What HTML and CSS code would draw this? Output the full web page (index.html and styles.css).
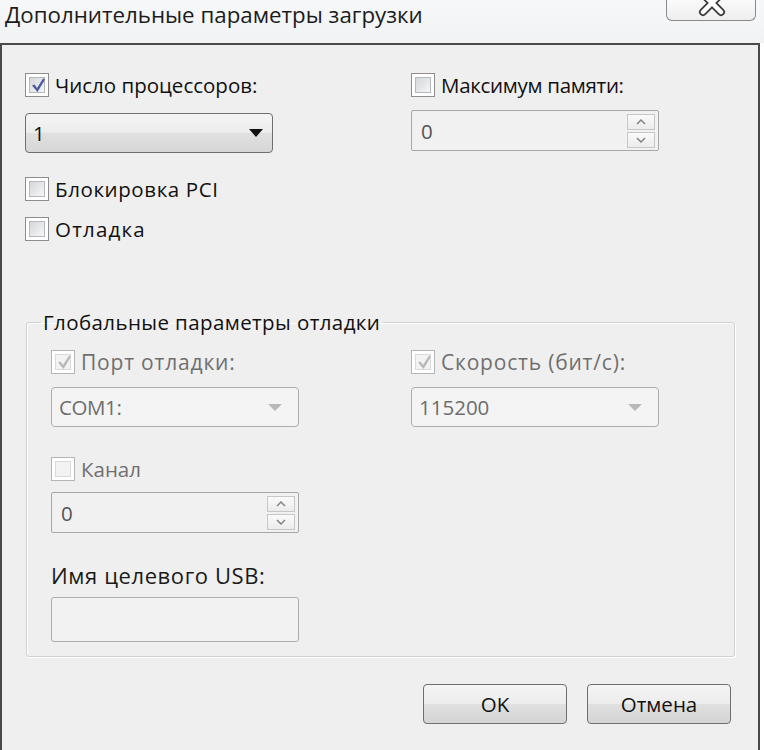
FILE: index.html
```html
<!DOCTYPE html>
<html lang="ru">
<head>
<meta charset="utf-8">
<title>Дополнительные параметры загрузки</title>
<link rel="stylesheet" href="styles.css">
</head>
<body>
<div class="titlebar">
  <div class="title">Дополнительные параметры загрузки</div>
  <div class="close">
    <svg width="34" height="20" viewBox="0 0 34 20">
      <path d="M8 -5 L26 13 M26 -5 L8 13" stroke="#3a3a3a" stroke-width="8" stroke-linecap="round" fill="none"/>
      <path d="M8 -5 L26 13 M26 -5 L8 13" stroke="#ffffff" stroke-width="4.5" stroke-linecap="round" fill="none"/>
    </svg>
  </div>
</div>
<div class="window">
  <div class="top">
    <div class="col col-left">
      <div class="check">
        <span class="box"><svg class="tick" viewBox="0 0 16 16"><path d="M2 8.5 L4.5 7.5 L7 11 L13 1.5 L15 2.5 L7.5 15 Z" fill="#4b5a9c"/></svg></span>
        <span class="lbl">Число процессоров:</span>
      </div>
      <div class="combo">
        <span class="val">1</span>
        <span class="arrow"></span>
      </div>
      <div class="check gap-24">
        <span class="box"></span>
        <span class="lbl w-pci">Блокировка PCI</span>
      </div>
      <div class="check gap-16">
        <span class="box"></span>
        <span class="lbl w-otl">Отладка</span>
      </div>
    </div>
    <div class="col">
      <div class="check">
        <span class="box"></span>
        <span class="lbl w-mem">Максимум памяти:</span>
      </div>
      <div class="spin spin-top">
        <span class="val">0</span>
        <div class="spinbtns">
          <span class="sbtn"><svg width="10" height="6" viewBox="0 0 10 6"><path d="M1 5 L5 1 L9 5" stroke="#7d7d7d" stroke-width="1.4" fill="none"/></svg></span>
          <span class="sbtn"><svg width="10" height="6" viewBox="0 0 10 6"><path d="M1 1 L5 5 L9 1" stroke="#7d7d7d" stroke-width="1.4" fill="none"/></svg></span>
        </div>
      </div>
    </div>
  </div>

  <fieldset class="group">
    <legend>Глобальные параметры отладки</legend>
    <div class="grow">
      <div class="gcol gcol-left">
        <div class="check disabled">
          <span class="box"><svg class="tick" viewBox="0 0 16 16"><path d="M2 8.5 L4.5 7.5 L7 11 L13 1.5 L15 2.5 L7.5 15 Z" fill="#b9b9b9"/></svg></span>
          <span class="lbl w-port">Порт отладки:</span>
        </div>
        <div class="combo dis">
          <span class="val w-com">COM1:</span>
          <span class="darrow"></span>
        </div>
      </div>
      <div class="gcol">
        <div class="check disabled">
          <span class="box"><svg class="tick" viewBox="0 0 16 16"><path d="M2 8.5 L4.5 7.5 L7 11 L13 1.5 L15 2.5 L7.5 15 Z" fill="#b9b9b9"/></svg></span>
          <span class="lbl w-speed">Скорость (бит/с):</span>
        </div>
        <div class="combo dis">
          <span class="val">115200</span>
          <span class="darrow"></span>
        </div>
      </div>
    </div>
    <div class="check disabled kanal">
      <span class="box"></span>
      <span class="lbl">Канал</span>
    </div>
    <div class="spin spin-kanal">
      <span class="val">0</span>
      <div class="spinbtns">
        <span class="sbtn"><svg width="10" height="6" viewBox="0 0 10 6"><path d="M1 5 L5 1 L9 5" stroke="#7d7d7d" stroke-width="1.4" fill="none"/></svg></span>
        <span class="sbtn"><svg width="10" height="6" viewBox="0 0 10 6"><path d="M1 1 L5 5 L9 1" stroke="#7d7d7d" stroke-width="1.4" fill="none"/></svg></span>
      </div>
    </div>
    <div class="usb-label">Имя целевого USB:</div>
    <div class="textbox"></div>
  </fieldset>

  <div class="buttons">
    <button class="btn">OK</button>
    <button class="btn">Отмена</button>
  </div>
</div>
</body>
</html>
```
FILE: styles.css
```css
html, body {
  margin: 0;
  padding: 0;
  background: #ffffff;
  width: 764px;
  height: 750px;
  overflow: hidden;
  font-family: "Open Sans", "Noto Sans", sans-serif;
  color: #111;
}

.titlebar {
  height: 43px;
  display: flex;
  justify-content: space-between;
  align-items: flex-start;
  background: linear-gradient(#f7f8f9, #f1f2f3);
}

.title {
  font-size: 22.3px;
  line-height: 30px;
  padding-left: 5px;
  color: #1c1c1c;
}

.close {
  width: 90px;
  height: 22px;
  margin-right: 8px;
  margin-top: -1px;
  box-sizing: border-box;
  border: 1px solid #8a8a8a;
  border-top: none;
  border-radius: 0 0 6px 6px;
  background: linear-gradient(#fbfbfb, #eeeeee);
  display: flex;
  justify-content: center;
  align-items: flex-start;
}

.close svg { display: block; margin-left: 2px; }

.window {
  width: 760px;
  height: 707px;
  box-sizing: border-box;
  border-top: 2px solid #4a4a4a;
  border-left: 2px solid #4a4a4a;
  border-right: 2px solid #4a4a4a;
  background: #efefef;
  padding-top: 28px;
}

.top {
  display: flex;
  padding-left: 23px;
}

.col-left { width: 386px; }
.col { display: flex; flex-direction: column; }

.check {
  display: flex;
  align-items: center;
  height: 24px;
  font-size: 20.5px;
}

.gap-24 { margin-top: 24px; }
.gap-16 { margin-top: 16px; }

.box {
  width: 24px;
  height: 24px;
  box-sizing: border-box;
  border: 1px solid #8d8d8d;
  background: #ffffff;
  padding: 3px;
  position: relative;
  flex: none;
}

.box::before {
  content: "";
  display: block;
  width: 100%;
  height: 100%;
  box-sizing: border-box;
  border: 1px solid #b4b7bc;
  background: linear-gradient(135deg, #d4d6da, #f6f6f6);
}

.box .tick {
  position: absolute;
  left: 4px;
  top: 2px;
  width: 16px;
  height: 18px;
}

.lbl { margin-left: 6px; line-height: 24px; white-space: nowrap; }

.w-pci { letter-spacing: 0.6px; }
.w-otl { letter-spacing: 1.2px; }
.w-mem { letter-spacing: -0.3px; }
.w-port { letter-spacing: 0.8px; font-size: 21px; }
.w-speed { letter-spacing: 0.8px; font-size: 21px; }
.w-com { letter-spacing: -0.4px; }

.disabled .lbl { color: #6f6f6f; }
.disabled .box { border-color: #b5b5b5; }
.disabled .box::before { border-color: #d9d9d9; background: #f3f3f3; }

.combo {
  width: 248px;
  height: 40px;
  margin-top: 16px;
  box-sizing: border-box;
  border: 1px solid #6f6f6f;
  border-radius: 4px;
  background: linear-gradient(#f4f4f4 0%, #ececec 50%, #e0e0e0 51%, #d6d6d6 100%);
  display: flex;
  align-items: center;
  justify-content: space-between;
  padding: 0 8px 0 7px;
  font-size: 20.5px;
}

.arrow {
  width: 0;
  height: 0;
  border-left: 7px solid transparent;
  border-right: 7px solid transparent;
  border-top: 8px solid #111;
  margin-right: 1px;
}

.combo.dis {
  margin-top: 13px;
  border-color: #a9aeb1;
  background: #f4f4f4;
  color: #6d6d6d;
}

.darrow {
  width: 0;
  height: 0;
  border-left: 7px solid transparent;
  border-right: 7px solid transparent;
  border-top: 7px solid #b8b8b8;
  margin-right: 8px;
}

.spin {
  width: 248px;
  height: 41px;
  box-sizing: border-box;
  border: 1px solid #a8a8a8;
  border-radius: 2px;
  background: #f1f1f1;
  display: flex;
  align-items: center;
  justify-content: space-between;
  padding: 0 3px 0 9px;
  font-size: 20.5px;
  color: #555;
}

.spin-top { margin-top: 13px; }

.spinbtns {
  display: flex;
  flex-direction: column;
  gap: 2px;
}

.sbtn {
  width: 28px;
  height: 16px;
  box-sizing: border-box;
  border: 1px solid #c7c7c7;
  background: linear-gradient(#fafafa, #ececec);
  display: flex;
  align-items: center;
  justify-content: center;
}

.sbtn svg { display: block; }

.group {
  margin: 67px 0 0 24px;
  width: 709px;
  min-width: 0;
  box-sizing: border-box;
  border: 1px solid #d2d2d2;
  border-radius: 3px;
  box-shadow: inset 1px 1px 0 #ffffff, 1px 1px 0 #ffffff;
  padding: 0 0 14px 24px;
}

.group legend {
  margin-left: -10px;
  padding: 0 2px;
  font-size: 20.5px;
  line-height: 28px;
  color: #111;
  letter-spacing: 0.4px;
}

.grow {
  display: flex;
  margin-top: 14px;
}

.gcol-left { width: 360px; flex: none; }

.kanal { margin-top: 30px; }

.spin-kanal { margin-top: 11px; }

.usb-label {
  margin-top: 28px;
  height: 28px;
  line-height: 28px;
  font-size: 22px;
  letter-spacing: 0.6px;
  color: #1a1a1a;
}

.textbox {
  margin-top: 8px;
  width: 248px;
  height: 45px;
  box-sizing: border-box;
  border: 1px solid #adadad;
  border-radius: 3px;
  background: #f2f2f2;
}

.buttons {
  display: flex;
  justify-content: flex-end;
  gap: 20px;
  margin-top: 27px;
  padding-right: 27px;
}

.btn {
  width: 144px;
  height: 40px;
  box-sizing: border-box;
  border: 1px solid #6f6f6f;
  border-radius: 4px;
  background: linear-gradient(#f4f4f4 0%, #ececec 50%, #e0e0e0 51%, #d4d4d4 100%);
  font-family: "Open Sans", "Noto Sans", sans-serif;
  font-size: 20.5px;
  color: #111;
  padding: 0;
}
```
